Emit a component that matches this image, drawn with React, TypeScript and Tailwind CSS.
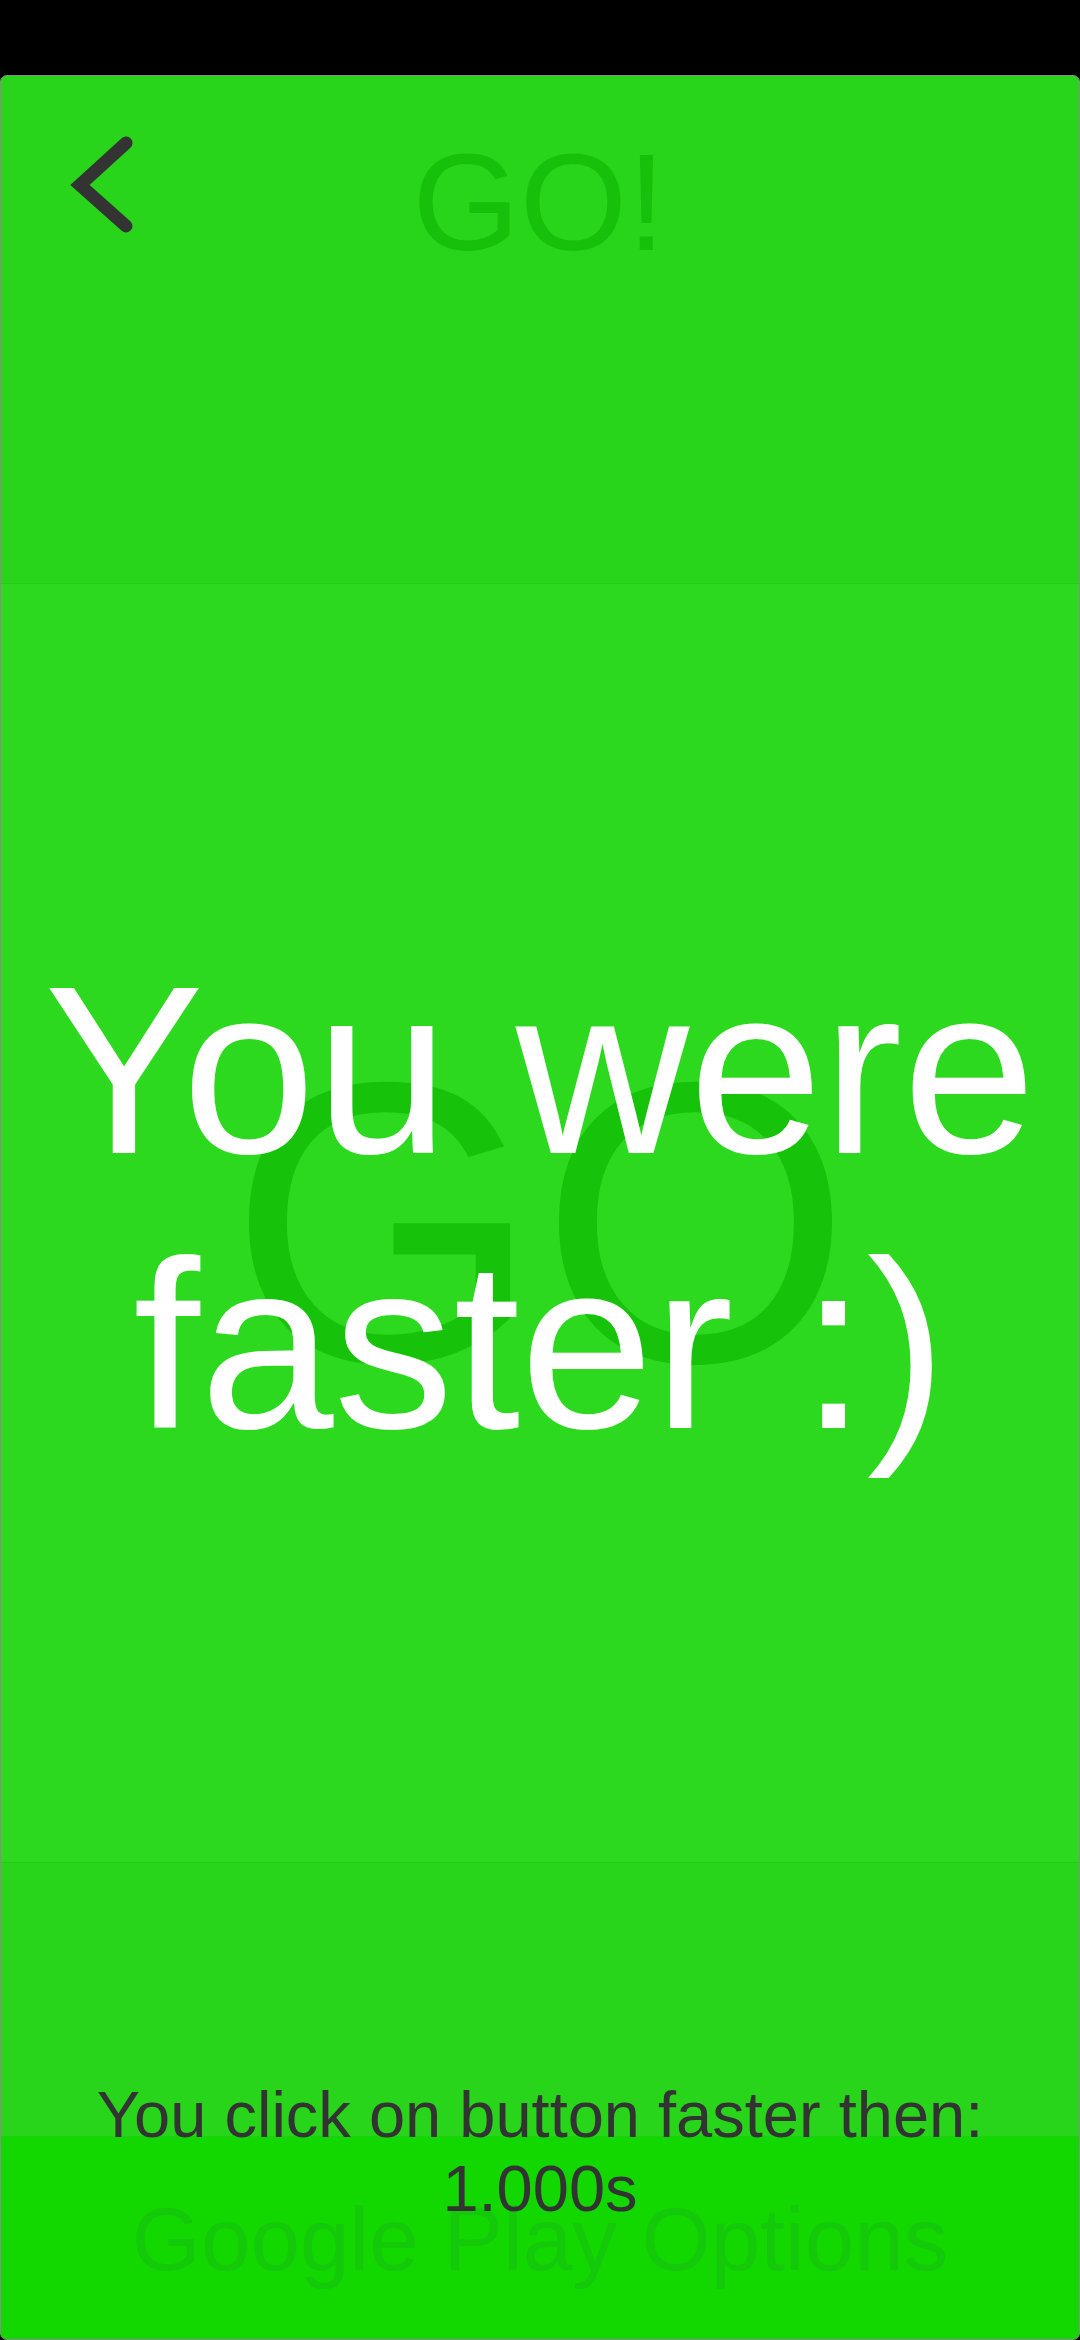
import React from 'react';

const font = { fontFamily: '"Liberation Sans", Arial, sans-serif' };

const BackChevron: React.FC = () => (
	<svg width="80" height="110" viewBox="0 0 80 110" className="block">
		<polyline
			points="66,14 20,56 66,97"
			fill="none"
			stroke="#333333"
			strokeWidth="13"
			strokeLinecap="round"
			strokeLinejoin="miter"
		/>
	</svg>
);

const App: React.FC = () => {
	return (
		<div className="min-h-[2340px] w-[1080px] bg-black pt-[75px]" style={font}>
			<div className="flex h-[2265px] flex-col overflow-hidden rounded-[7px] border border-[#8c8c8c] bg-[#28d51b]">
				{/* header */}
				<div className="grid h-[507px] grid-cols-[1fr_auto_1fr] items-start">
					<div className="pl-[59px] pt-[53px]">
						<BackChevron />
					</div>
					<h1 className="pt-[57px] pr-[2px] text-[138px] leading-[138px] text-[#17c10b]">GO!</h1>
					<div />
				</div>

				{/* result panel */}
				<div className="grid h-[1280px] place-items-center border-y border-[#24cc17] bg-[#2cd91f]">
					<div className="[grid-area:1/1] text-[400px] leading-none text-[#17c20a]">GO</div>
					<p className="[grid-area:1/1] pb-[30px] text-center text-[240px] leading-[275px] text-white">
						You were
						<br />
						faster :)
					</p>
				</div>

				{/* footer */}
				<div className="grid flex-1">
					<div className="[grid-area:1/1] flex flex-col">
						<div className="flex-1" />
						<div className="flex h-[203px] items-center justify-center border-t border-[#1fcf12] bg-[#12d800]">
							<span className="pt-[2px] text-[89px] leading-none text-[#14c80a]">Google Play Options</span>
						</div>
					</div>
					<div className="[grid-area:1/1] z-10 self-start pt-[215px] text-center text-[65px] leading-[74px] text-[#333333]">
						You click on button faster then:
						<br />
						1.000s
					</div>
				</div>
			</div>
		</div>
	);
};

export default App;
